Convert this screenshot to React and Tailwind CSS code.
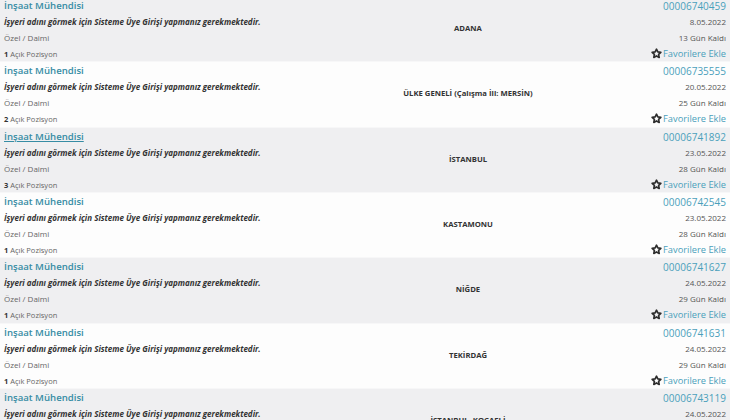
import React from "react";

const rows = [
  { city: "ADANA", n: 1, id: "00006740459", date: "8.05.2022", left: "13 Gün Kaldı" },
  { city: "ÜLKE GENELİ (Çalışma İli: MERSİN)", n: 2, id: "00006735555", date: "20.05.2022", left: "25 Gün Kaldı" },
  { city: "İSTANBUL", n: 3, id: "00006741892", date: "23.05.2022", left: "28 Gün Kaldı", underline: true },
  { city: "KASTAMONU", n: 1, id: "00006742545", date: "23.05.2022", left: "28 Gün Kaldı" },
  { city: "NİĞDE", n: 1, id: "00006741627", date: "24.05.2022", left: "29 Gün Kaldı" },
  { city: "TEKİRDAĞ", n: 1, id: "00006741631", date: "24.05.2022", left: "29 Gün Kaldı" },
  { city: "İSTANBUL, KOCAELİ", n: 1, id: "00006743119", date: "24.05.2022", left: "29 Gün Kaldı" },
];

function Star() {
  return (
    <svg width="11" height="11" viewBox="0 0 24 24" className="inline-block mr-[1px] -mt-[2px]">
      <path
        d="M12 2.5l2.9 6.1 6.6.8-4.9 4.6 1.3 6.6L12 17.3l-5.9 3.3 1.3-6.6-4.9-4.6 6.6-.8z"
        fill="none"
        stroke="#2d2d2d"
        strokeWidth="3.6"
        strokeLinejoin="round"
      />
    </svg>
  );
}

export default function App() {
  return (
    <div className="w-[730px] h-[420px] overflow-hidden bg-white" style={{ fontFamily: '"Open Sans", sans-serif' }}>
      <div className="-mt-[3px]">
        {rows.map((r, i) => (
          <div
            key={i}
            className={`flex h-[65.33px] pt-[1px] ${i % 2 === 0 ? "bg-[#efeff1]" : "bg-[#fdfdfd]"} border-b border-[#f7f7f8]`}
          >
            <div className="w-[304px] pl-[4px]">
              <div className={`leading-[16px] text-[9.6px] font-semibold text-[#368ca4] ${r.underline ? "underline" : ""}`}>
                İnşaat Mühendisi
              </div>
              <div className="leading-[16px] text-[8px] font-bold italic text-[#333] whitespace-nowrap">
                İşyeri adını görmek için Sisteme Üye Girişi yapmanız gerekmektedir.
              </div>
              <div className="leading-[16px] text-[8px] text-[#666]">Özel / Daimi</div>
              <div className="leading-[16px] text-[7.5px] text-[#666]">
                <span className="font-bold text-[#333]">{r.n}</span> Açık Pozisyon
              </div>
            </div>
            <div className="flex-1 flex items-center justify-center pb-[2px] pl-[2px]">
              <span className="text-[7.7px] font-bold text-[#333] whitespace-nowrap">{r.city}</span>
            </div>
            <div className="w-[100px] pr-[4px] text-right">
              <div className="leading-[16px] text-[10px] text-[#4a9fbb]">{r.id}</div>
              <div className="leading-[16px] text-[8px] text-[#555]">{r.date}</div>
              <div className="leading-[16px] text-[8px] text-[#555]">{r.left}</div>
              <div className="leading-[16px] text-[9.3px] text-[#4a9fbb] whitespace-nowrap">
                <Star />
                Favorilere Ekle
              </div>
            </div>
          </div>
        ))}
      </div>
    </div>
  );
}
